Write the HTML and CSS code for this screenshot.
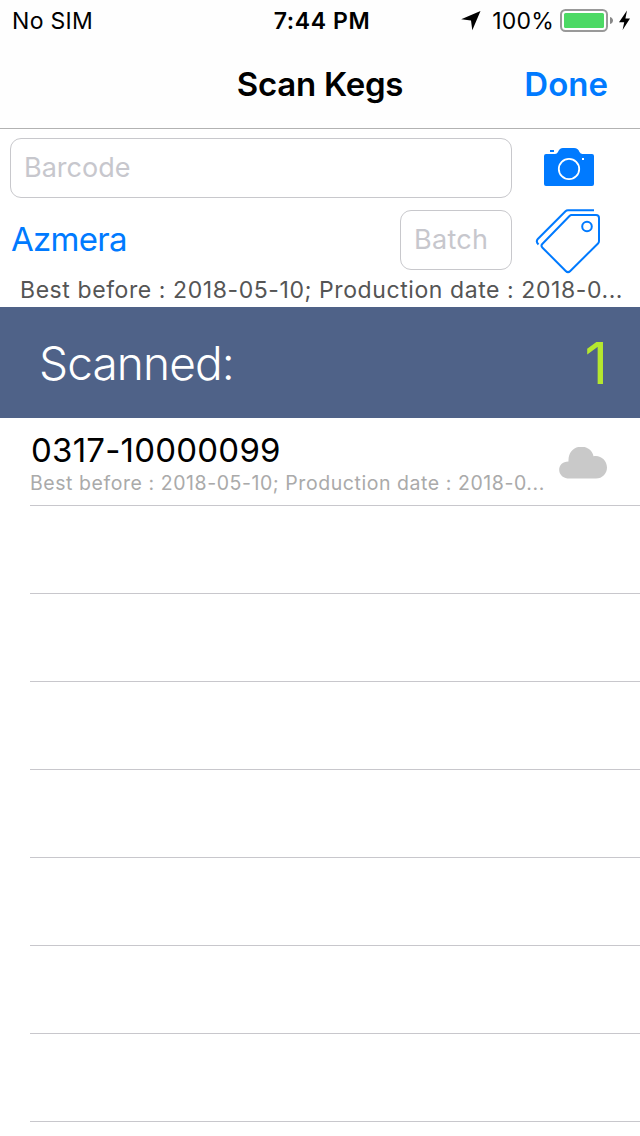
FILE: index.html
```html
<!DOCTYPE html>
<html lang="en">
<head>
<meta charset="utf-8">
<title>Scan Kegs</title>
<link rel="stylesheet" href="styles.css">
</head>
<body>
<header class="header">
  <div class="status">
    <span class="carrier">No SIM</span>
    <span class="time">7:44 PM</span>
    <span class="power">
      <svg class="arrow" width="22" height="22" viewBox="0 0 22 22"><path d="M20.5 1 12.3 20.3 11 10.5 1.2 9.3Z"/></svg>
      <span class="percent">100%</span>
      <svg class="battery" width="72" height="24" viewBox="0 0 72 24"><rect x="1" y="1" width="46" height="21" rx="4.5" fill="none" stroke="#999" stroke-width="2"/><rect x="4" y="4" width="40" height="15" rx="1.5" fill="#4cd964"/><path d="M50 8c4 1 4 6 0 7Z" fill="#888"/><path d="M67 1.5 59 13.2h5.2L62.6 21 70 9.5h-4.6Z"/></svg>
    </span>
  </div>
  <nav class="nav">
    <span></span>
    <h1 class="title">Scan Kegs</h1>
    <a class="done">Done</a>
  </nav>
</header>
<section class="form">
  <div class="row">
    <div class="field barcode"><span>Barcode</span></div>
    <svg class="icon" width="70" height="70" viewBox="534 132 70 70"><path fill="#007aff" d="M546 154h9q2 0 3-2 1.500-4 5-4h11q4 0 5.500 4 1 2 3 2h9.500q2 0 2 2v28q0 2-2 2h-46q-2 0-2-2v-28q0-2 2-2ZM550 150h4v2h-4Z"/><circle cx="569" cy="169" r="10.200" fill="none" stroke="#fff" stroke-width="1.800"/><path fill="#fff" d="M582 158h2v2h-2z"/></svg>
  </div>
  <div class="row">
    <a class="brand">Azmera</a>
    <div class="field batch"><span>Batch</span></div>
    <svg class="icon" width="70" height="70" viewBox="534 205 70 70" fill="none" stroke="#007aff" stroke-width="2"><path d="M571.500 215H596q3 0 3 3v23q0 1.500-1 2.500L570.300 271q-2.300 2.300-4.600 0L542.500 247.700q-2-2 0-4L569.500 216q1-1 2-1ZM594 210.200H568q-1.500 0-2.500 1L537.800 239q-2.300 2.500.7 5.500"/><circle cx="587" cy="226.500" r="4.800"/></svg>
  </div>
  <p class="dates">Best before : 2018-05-10; Production date : 2018-0...</p>
</section>
<section class="summary"><span class="label">Scanned:</span><span class="count">1</span></section>
<ul class="list">
  <li class="item">
    <div class="info"><div class="code">0317-10000099</div><div class="detail">Best before : 2018-05-10; Production date : 2018-0...</div></div>
    <svg class="cloud" width="48" height="32" viewBox="0 0 48 32"><path fill="#c9c9c9" d="M8.500 31.500C-3 30-2.500 14.500 9.500 14.500 8.500-3.500 31.500-5 34.500 9.200 41 7.500 48 13 48 20.500c0 6-4.500 11-11 11Z"/></svg>
  </li>
  <li class="item"></li><li class="item"></li><li class="item"></li><li class="item"></li><li class="item"></li><li class="item"></li><li class="item"></li>
</ul>
</body>
</html>
```
FILE: styles.css
```css
* { box-sizing: border-box; }
body { margin: 0; width: 640px; height: 1136px; overflow: hidden; background: #fff; color: #000; font-family: Inter, "Liberation Sans", sans-serif; white-space: nowrap; }
.header { height: 129px; background: #fefefe; border-bottom: 1px solid #b2b2b2; }
.status { display: grid; grid-template-columns: 1fr auto 1fr; height: 40px; padding: 0 8px 0 12px; font-size: 23px; line-height: 42px; }
.carrier { letter-spacing: .3px; }
.time { font-weight: 600; letter-spacing: .6px; }
.power { display: flex; justify-content: flex-end; }
.arrow { margin: 10px 10px 0 0; }
.percent { margin-right: 6px; letter-spacing: .2px; }
.battery { margin-top: 9px; }
.nav { display: grid; grid-template-columns: 1fr auto 1fr; height: 88px; padding: 0 32px; line-height: 88px; font-size: 33px; font-weight: 600; }
.title { margin: 0; font-size: inherit; font-weight: 600; letter-spacing: -.25px; }
.done { color: #007aff; text-align: right; }
.form { height: 178px; padding: 9px 10px 0; }
.row { display: flex; align-items: center; height: 60px; margin-bottom: 12px; }
.field { height: 60px; padding-left: 13px; border: 1px solid #c8c8cc; border-radius: 11px; color: #c7c7cd; font-size: 27px; line-height: 57px; }
.barcode { width: 502px; }
.batch { width: 112px; margin-left: auto; letter-spacing: .3px; }
.icon { flex: none; margin: 0 26px 0 22px; width: 70px; }
.row:first-child .icon { margin-top: -2px; }
.brand { padding: 0 0 2px 1px; color: #007aff; font-size: 33px; letter-spacing: -.7px; }
.dates { margin: -1px 0 0 10px; font-size: 23px; line-height: 18px; letter-spacing: .58px; color: #555; }
.summary { display: flex; justify-content: space-between; height: 111px; padding: 0 32px 0 39px; background: #4f6288; line-height: 112px; color: #fff; }
.label { font-size: 46px; font-weight: 350; letter-spacing: -.9px; }
.count { color: #b5e72e; font-size: 58px; font-weight: 400; }
.list { margin: 0; padding: 0 0 0 30px; list-style: none; }
.item { display: flex; justify-content: space-between; height: 88px; padding-right: 33px; border-bottom: 1px solid #c8c7cc; }
.code { margin: 13px 0 0 1px; font-size: 33px; line-height: 39px; letter-spacing: .22px; }
.detail { font-size: 19.500px; line-height: 26px; letter-spacing: .56px; color: #aaa; }
.cloud { margin-top: 29px; }
```
